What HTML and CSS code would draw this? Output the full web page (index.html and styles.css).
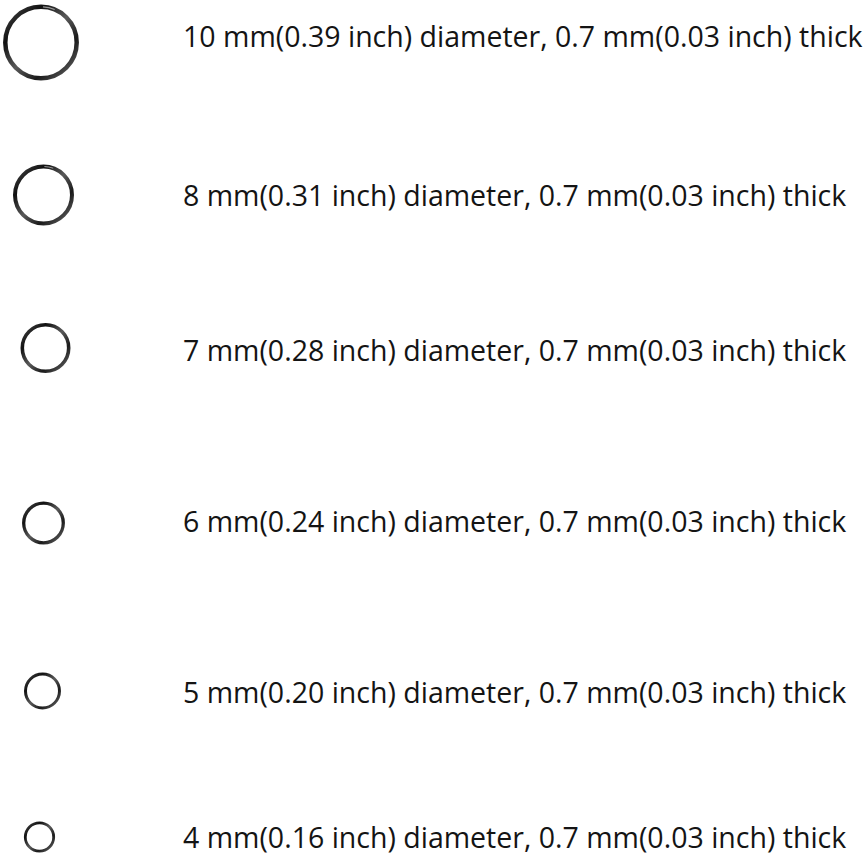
FILE: index.html
```html
<!DOCTYPE html>
<html>
<head>
<meta charset="utf-8">
<link rel="stylesheet" href="styles.css">
</head>
<body>
<svg class="defs" width="0" height="0" aria-hidden="true">
  <defs>
    <linearGradient id="metal" x1="0" y1="0" x2="1" y2="1">
      <stop offset="0" stop-color="#4a4a4a"/>
      <stop offset="0.25" stop-color="#111"/>
      <stop offset="0.5" stop-color="#5a5a5a"/>
      <stop offset="0.72" stop-color="#1a1a1a"/>
      <stop offset="1" stop-color="#707070"/>
    </linearGradient>
  </defs>
</svg>
<main class="sheet">
  <div class="row row-1">
    <svg class="ring" width="100" height="90" viewBox="0 0 100 90"><circle cx="41" cy="51.5" r="35.7" fill="none" stroke="url(#metal)" stroke-width="4.5"/><circle cx="41" cy="51.5" r="35.7" fill="none" stroke="#e8e8e8" stroke-width="1.2" stroke-dasharray="12 210" stroke-dashoffset="-170" opacity="0.6"/></svg>
    <p class="label">10 mm(0.39 inch) diameter, 0.7 mm(0.03 inch) thick</p>
  </div>
  <div class="row row-2">
    <svg class="ring" width="100" height="90" viewBox="0 0 100 90"><circle cx="43.5" cy="45" r="28.5" fill="none" stroke="url(#metal)" stroke-width="4"/><circle cx="43.5" cy="45" r="28.5" fill="none" stroke="#e8e8e8" stroke-width="1" stroke-dasharray="9 200" stroke-dashoffset="-135" opacity="0.6"/></svg>
    <p class="label">8 mm(0.31 inch) diameter, 0.7 mm(0.03 inch) thick</p>
  </div>
  <div class="row row-3">
    <svg class="ring" width="100" height="90" viewBox="0 0 100 90"><circle cx="45.5" cy="43" r="23.2" fill="none" stroke="url(#metal)" stroke-width="3.6"/></svg>
    <p class="label">7 mm(0.28 inch) diameter, 0.7 mm(0.03 inch) thick</p>
  </div>
  <div class="row row-4">
    <svg class="ring" width="100" height="90" viewBox="0 0 100 90"><circle cx="43.5" cy="47" r="19.8" fill="none" stroke="url(#metal)" stroke-width="3.3"/></svg>
    <p class="label">6 mm(0.24 inch) diameter, 0.7 mm(0.03 inch) thick</p>
  </div>
  <div class="row row-5">
    <svg class="ring" width="100" height="90" viewBox="0 0 100 90"><circle cx="42.5" cy="44" r="17" fill="none" stroke="url(#metal)" stroke-width="3"/></svg>
    <p class="label">5 mm(0.20 inch) diameter, 0.7 mm(0.03 inch) thick</p>
  </div>
  <div class="row row-6">
    <svg class="ring" width="100" height="90" viewBox="0 0 100 90"><circle cx="39.5" cy="45" r="14.2" fill="none" stroke="url(#metal)" stroke-width="2.8"/></svg>
    <p class="label">4 mm(0.16 inch) diameter, 0.7 mm(0.03 inch) thick</p>
  </div>
</main>
</body>
</html>
```

FILE: styles.css
```css
html, body {
  margin: 0;
  padding: 0;
  background: #ffffff;
  overflow: hidden;
}
.defs {
  position: absolute;
  width: 0;
  height: 0;
}
.sheet {
  display: flex;
  flex-direction: column;
  width: 867px;
  height: 855px;
  overflow: hidden;
}
.row {
  display: flex;
  align-items: center;
  height: 90px;
  flex-shrink: 0;
}
.row-1 { margin-top: -9px; }
.row-2 { margin-top: 69px; }
.row-3 { margin-top: 65px; }
.row-4 { margin-top: 81px; }
.row-5 { margin-top: 81px; }
.row-6 { margin-top: 55px; }
.ring {
  flex-shrink: 0;
  display: block;
}
.label {
  margin: 0 0 0 83px;
  font-family: "Open Sans", "Noto Sans", sans-serif;
  font-size: 28.5px;
  color: #141414;
  white-space: nowrap;
}
```
